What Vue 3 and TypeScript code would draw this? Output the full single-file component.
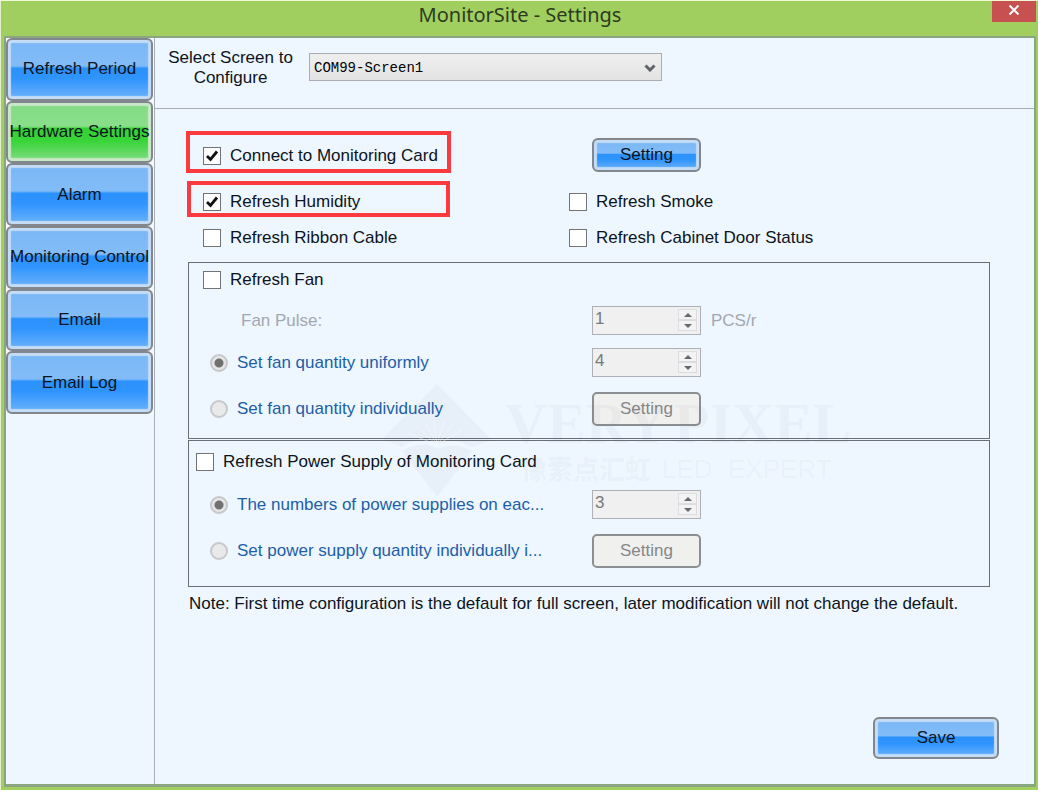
<script setup lang="ts">
import { ref } from 'vue'

const tabs = ['Refresh Period', 'Hardware Settings', 'Alarm', 'Monitoring Control', 'Email', 'Email Log']
const activeTab = ref('Hardware Settings')
const screen = ref('COM99-Screen1')

const connectCard = ref(true)
const humidity = ref(true)
const smoke = ref(false)
const ribbon = ref(false)
const door = ref(false)
const fan = ref(false)
const power = ref(false)

const fanPulse = ref(1)
const fanQuantity = ref(4)
const powerQuantity = ref(3)
const fanMode = ref('uniform')
const powerMode = ref('uniform')
</script>

<template>
  <div class="window">
    <header class="titlebar">
      <h1>MonitorSite - Settings</h1>
      <button class="close" type="button" aria-label="Close">
        <svg viewBox="0 0 12 10" width="12" height="10"><path d="M1.5 0.5 L10.5 9.5 M10.5 0.5 L1.5 9.5" /></svg>
      </button>
    </header>

    <div class="frame">
      <nav class="sidebar">
        <div class="tabs">
          <button
            v-for="tab in tabs"
            :key="tab"
            type="button"
            class="glossy tab"
            :class="{ active: tab === activeTab }"
            @click="activeTab = tab"
          >{{ tab }}</button>
        </div>
      </nav>

      <main class="main">
        <div class="picker">
          <label for="screen">Select Screen to Configure</label>
          <div class="select-box">
            <select id="screen" v-model="screen">
              <option>COM99-Screen1</option>
            </select>
            <svg class="chevron" viewBox="0 0 12 8" width="12" height="8"><path d="M1.5 1.5 L6 6 L10.5 1.5" /></svg>
          </div>
        </div>

        <section class="content">
          <div class="row first">
            <div class="cell">
              <label class="check marked card"><input v-model="connectCard" type="checkbox" />Connect to Monitoring Card</label>
            </div>
            <button type="button" class="glossy setting inset">Setting</button>
          </div>
          <div class="row second">
            <div class="cell">
              <label class="check marked humid"><input v-model="humidity" type="checkbox" />Refresh Humidity</label>
            </div>
            <label class="check drop"><input v-model="smoke" type="checkbox" />Refresh Smoke</label>
          </div>
          <div class="row third">
            <div class="cell">
              <label class="check plain"><input v-model="ribbon" type="checkbox" />Refresh Ribbon Cable</label>
            </div>
            <label class="check"><input v-model="door" type="checkbox" />Refresh Cabinet Door Status</label>
          </div>

          <div class="panel fan">
            <label class="check panel-title"><input v-model="fan" type="checkbox" />Refresh Fan</label>
            <div class="line">
              <label class="lead muted" for="pulse">Fan Pulse:</label>
              <div class="spin">
                <input id="pulse" v-model="fanPulse" type="text" disabled />
                <span class="arrows"><button type="button" disabled aria-label="Increase"><i class="up"></i></button><button type="button" disabled aria-label="Decrease"><i class="down"></i></button></span>
              </div>
              <span class="unit muted">PCS/r</span>
            </div>
            <div class="line">
              <label class="lead radio"><input v-model="fanMode" type="radio" name="fan" value="uniform" disabled />Set fan quantity uniformly</label>
              <div class="spin">
                <input v-model="fanQuantity" type="text" aria-label="Fan quantity" disabled />
                <span class="arrows"><button type="button" disabled aria-label="Increase"><i class="up"></i></button><button type="button" disabled aria-label="Decrease"><i class="down"></i></button></span>
              </div>
            </div>
            <div class="line tall">
              <label class="lead radio"><input v-model="fanMode" type="radio" name="fan" value="individual" disabled />Set fan quantity individually</label>
              <button type="button" class="setting off" disabled>Setting</button>
            </div>
          </div>

          <div class="panel power">
            <label class="check panel-title"><input v-model="power" type="checkbox" />Refresh Power Supply of Monitoring Card</label>
            <div class="line">
              <label class="lead radio"><input v-model="powerMode" type="radio" name="power" value="uniform" disabled />The numbers of power supplies on eac...</label>
              <div class="spin">
                <input v-model="powerQuantity" type="text" aria-label="Power supply quantity" disabled />
                <span class="arrows"><button type="button" disabled aria-label="Increase"><i class="up"></i></button><button type="button" disabled aria-label="Decrease"><i class="down"></i></button></span>
              </div>
            </div>
            <div class="line tall">
              <label class="lead radio"><input v-model="powerMode" type="radio" name="power" value="individual" disabled />Set power supply quantity individually i...</label>
              <button type="button" class="setting off" disabled>Setting</button>
            </div>
          </div>

          <p class="note">Note: First time configuration is the default for full screen, later modification will not change the default.</p>

          <svg class="watermark" viewBox="0 0 480 120" width="480" height="120" aria-hidden="true">
            <path d="M57 3 L112 59 L92 66 Q74 55 58 64 Q40 53 22 66 L2 58 Z" />
            <path d="M58 68 Q74 60 92 70 L57 116 L22 70 Q42 58 58 68 Z" />
            <path class="rays" d="M57 64 L28 52 M57 64 L36 45 M57 64 L45 41 M57 64 L54 40 M57 64 L64 40 M57 64 L73 43 M57 64 L82 49" />
            <text x="125" y="62" class="brand">VERY</text>
            <text x="294" y="62" class="brand">PIXEL</text>
            <text x="141" y="98" class="han">像素点汇虹</text>
            <text x="282" y="97" class="latin">LED</text>
            <text x="348" y="97" class="latin">EXPERT</text>
          </svg>
        </section>

        <footer class="footer">
          <button type="button" class="glossy save">Save</button>
        </footer>
      </main>
    </div>
  </div>
</template>

<style>
body {
  margin: 0;
}
</style>

<style scoped>
* {
  box-sizing: border-box;
}

.window {
  display: flex;
  flex-direction: column;
  min-height: 100vh;
  padding: 0 2px 3px 3px;
  background: #a0cf5f;
  border-top: 1px solid #f0f8d4;
  border-left: 1px solid #e4efcf;
  color: #0c1420;
  font: 17px/20px "Liberation Sans", Arial, sans-serif;
}

.titlebar {
  display: grid;
  grid-template-columns: 1fr auto 1fr;
  height: 35px;
}

h1 {
  grid-column: 2;
  margin: 0;
  color: #2c3b20;
  font: 400 20px/28px "Noto Sans", "Open Sans", sans-serif;
}

.close {
  display: flex;
  align-items: center;
  justify-content: center;
  justify-self: end;
  width: 44px;
  height: 21px;
  padding: 0 0 4px;
  background: #c75050;
  border: 0;
}

.close path {
  fill: none;
  stroke: #fff;
  stroke-width: 2;
}

.frame {
  display: flex;
  flex: 1;
  background: #eef6ff;
  border: 2px solid #8ba583;
  border-bottom-width: 3px;
}

.sidebar {
  flex: none;
  width: 149px;
  border-right: 1px solid #a9adb8;
}

.tabs {
  display: grid;
  grid-template-rows: repeat(6, 1fr);
  height: 376px;
  padding-right: 1px;
  background: #f6f7f8;
}

button,
input,
select {
  color: inherit;
  font: inherit;
}

.glossy {
  padding: 0;
  background: linear-gradient(#7ab7f6 0%, #82bcf8 44%, #2b91fc 48%, #2f94fe 65%, #6cb2fa 100%);
  background-clip: padding-box;
  border: 2px solid #82868d;
  border-radius: 6px;
  box-shadow: inset 0 0 1px 3px #c4dcf5;
  text-align: center;
  white-space: nowrap;
}

.tab.active {
  background: linear-gradient(#82dc84 0%, #8ade8a 40%, #35d035 44%, #38d438 65%, #82dd82 100%);
  background-clip: padding-box;
  box-shadow: inset 0 0 1px 3px #cbe7c9;
}

.main {
  display: flex;
  flex: 1;
  flex-direction: column;
  min-width: 0;
}

.picker {
  display: flex;
  gap: 16px;
  height: 71px;
  padding: 10px 13px 0;
  border-bottom: 1px solid #a9adb8;
}

.picker label {
  flex: none;
  width: 125px;
  text-align: center;
}

.select-box {
  position: relative;
  flex: 0 1 353px;
  height: 28px;
  margin-top: 5px;
}

.select-box select {
  width: 100%;
  height: 100%;
  padding: 2px 4px 0;
  appearance: none;
  background: linear-gradient(#efefef, #e3e3e3);
  border: 1px solid #acacb2;
  border-radius: 0;
  color: #000;
  font: 14px/20px "Liberation Mono", "Courier New", monospace;
}

.chevron {
  position: absolute;
  top: 11px;
  right: 6px;
  fill: none;
  stroke: #60646a;
  stroke-width: 3;
  pointer-events: none;
}

.content {
  position: relative;
  padding: 22px 44px 0 31px;
}

.row {
  display: flex;
  align-items: center;
}

.first {
  height: 42px;
  margin-bottom: 8px;
}

.second {
  height: 36px;
}

.third {
  height: 41px;
}

.cell {
  flex: none;
  width: 383px;
}

.check {
  display: flex;
  align-items: center;
  gap: 9px;
}

.marked {
  width: 265px;
  height: 42px;
  padding: 7px 0 0 13px;
  border: 4px solid #fb3a40;
}

.humid {
  width: 263px;
  height: 36px;
  margin-left: 1px;
  padding: 5px 0 0 12px;
}

.plain {
  padding-left: 17px;
}

.drop {
  padding-top: 5px;
}

.check input {
  flex: none;
  width: 18px;
  height: 18px;
  margin: 0;
  appearance: none;
  background: #fff;
  border: 1px solid #717377;
}

.check input:checked {
  background: #fff url("data:image/svg+xml,%3Csvg xmlns='http://www.w3.org/2000/svg' viewBox='0 0 16 16'%3E%3Cpath d='M3 8 L6.5 11.5 L13 3.5' fill='none' stroke='%23111' stroke-width='2.8'/%3E%3C/svg%3E") center / 16px 16px no-repeat;
}

.setting {
  flex: none;
  width: 109px;
  height: 34px;
}

.inset {
  margin: 5px 0 0 23px;
}

.off {
  padding: 0;
  background: #f0f0ef;
  border: 2px solid #8c8f92;
  border-radius: 5px;
  color: #858789;
}

.panel {
  margin-left: 2px;
  padding-left: 1px;
  border: 1px solid #6a6e76;
}

.fan {
  height: 177px;
  margin-top: 4px;
  padding-top: 7px;
}

.power {
  height: 147px;
  margin-top: 1px;
  padding-top: 11px;
}

.panel-title {
  height: 20px;
  padding-left: 13px;
}

.power .panel-title {
  padding-left: 6px;
}

.line {
  display: flex;
  align-items: center;
  height: 29px;
  margin-top: 13px;
}

.fan .panel-title + .line {
  margin-top: 16px;
}

.power .panel-title + .line {
  margin-top: 18px;
}

.tall {
  height: 34px;
  margin-top: 15px;
}

.lead {
  flex: none;
  width: 402px;
  padding-left: 51px;
}

.muted {
  color: #a3a8b0;
}

.radio {
  display: flex;
  align-items: center;
  gap: 9px;
  padding-left: 20px;
  color: #1d5fa8;
}

.radio input {
  flex: none;
  width: 18px;
  height: 18px;
  margin: 0;
  appearance: none;
  background: #e9e9e9;
  border: 2px solid #c6c8ca;
  border-radius: 50%;
}

.radio input:checked {
  background: radial-gradient(circle, #707070 0 4px, #e6e6e6 5px);
}

.spin {
  display: flex;
  flex: none;
  width: 109px;
  height: 29px;
  padding: 2px;
  background: #f0f0f0;
  border: 1px solid #adb1b7;
}

.spin input {
  flex: 1;
  min-width: 0;
  padding: 0 0 3px;
  background: transparent;
  border: 0;
  color: #77797c;
}

.arrows {
  display: flex;
  flex-direction: column;
  width: 19px;
  margin: 0 1px 1px 0;
}

.arrows button {
  display: flex;
  flex: 1;
  align-items: center;
  justify-content: center;
  padding: 0;
  background: #f3f3f3;
  border: 1px solid #dcdde0;
}

.up,
.down {
  border: 4px solid transparent;
}

.up {
  border-top-width: 0;
  border-bottom-color: #65686c;
}

.down {
  border-bottom-width: 0;
  border-top-color: #65686c;
}

.unit {
  margin-left: 10px;
}

.note {
  margin: 7px 0 0 3px;
  white-space: nowrap;
}

.watermark {
  position: absolute;
  top: 272px;
  left: 225px;
  fill: rgba(60, 65, 75, 0.035);
  pointer-events: none;
}

.rays {
  stroke: rgba(255, 255, 255, 0.4);
  stroke-width: 1;
}

.brand {
  font: bold 58px "Liberation Serif", "Times New Roman", serif;
}

.han {
  font: 900 26px "Noto Sans CJK SC", sans-serif;
}

.latin {
  font: 26px "Liberation Sans", Arial, sans-serif;
}

.footer {
  display: flex;
  justify-content: flex-end;
  margin-top: auto;
  padding: 0 35px 25px;
}

.save {
  width: 126px;
  height: 42px;
}
</style>
